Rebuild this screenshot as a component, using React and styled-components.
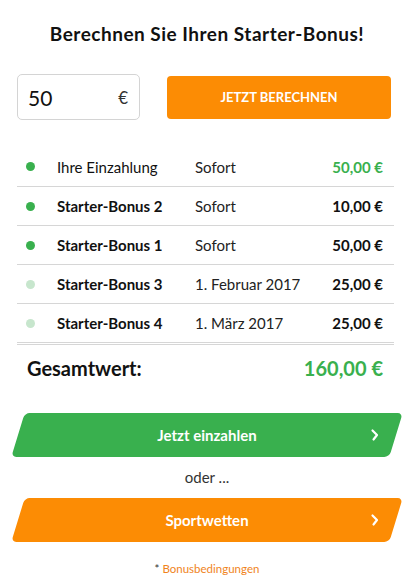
import styled, { createGlobalStyle } from "styled-components";

const GlobalStyle = createGlobalStyle`
  body {
    margin: 0;
    background: #fff;
    font-family: Lato, "Open Sans", sans-serif;
    color: #111;
  }
`;

const rows = [
  { label: "Ihre Einzahlung", when: "Sofort", amount: "50,00 €", active: true, deposit: true },
  { label: "Starter-Bonus 2", when: "Sofort", amount: "10,00 €", active: true },
  { label: "Starter-Bonus 1", when: "Sofort", amount: "50,00 €", active: true },
  { label: "Starter-Bonus 3", when: "1. Februar 2017", amount: "25,00 €" },
  { label: "Starter-Bonus 4", when: "1. März 2017", amount: "25,00 €" },
];

function Chevron() {
  return (
    <svg width="10" height="14" viewBox="0 0 10 14">
      <path d="M2.5 2.5 L7 7 L3.5 11.5" fill="none" stroke="#fff" strokeWidth="2.2" strokeLinecap="round" strokeLinejoin="round" />
    </svg>
  );
}

function App() {
  return (
    <Page>
      <GlobalStyle />
      <Title>Berechnen Sie Ihren Starter-Bonus!</Title>
      <Calc>
        <AmountBox>
          <span>50</span>
          <Euro>€</Euro>
        </AmountBox>
        <CalcButton>JETZT BERECHNEN</CalcButton>
      </Calc>
      <Table>
        {rows.map((r) => (
          <Row key={r.label}>
            <Dot active={r.active} />
            <Label bold={!r.deposit}>{r.label}</Label>
            <When>{r.when}</When>
            <Amount green={r.deposit}>{r.amount}</Amount>
          </Row>
        ))}
      </Table>
      <Total>
        <span>Gesamtwert:</span>
        <TotalAmount>160,00 €</TotalAmount>
      </Total>
      <SlantButton color="#39b04e">
        <span>Jetzt einzahlen</span>
        <Arrow><Chevron /></Arrow>
      </SlantButton>
      <Or>oder ...</Or>
      <SlantButton color="#fc8c04">
        <span>Sportwetten</span>
        <Arrow><Chevron /></Arrow>
      </SlantButton>
      <Terms>
        <Star>*</Star> Bonusbedingungen
      </Terms>
    </Page>
  );
}

export default App;

const Page = styled.div`
  width: 414px;
  box-sizing: border-box;
  padding: 22px 0 0;
  display: flex;
  flex-direction: column;
`;

const Title = styled.h1`
  margin: 0;
  text-align: center;
  font-size: 19px;
  font-weight: 700;
  line-height: 24px;
  letter-spacing: 0.5px;
  color: #111;
`;

const Calc = styled.div`
  display: flex;
  align-items: center;
  gap: 27px;
  padding: 0 23px 0 17px;
  margin-top: 28px;
`;

const AmountBox = styled.div`
  width: 123px;
  height: 46px;
  box-sizing: border-box;
  border: 1px solid #d4d4d4;
  border-radius: 5px;
  display: flex;
  align-items: center;
  justify-content: space-between;
  padding: 0 11px 0 10px;
  font-size: 21px;
  color: #111;
`;

const Euro = styled.span`
  font-size: 17px;
  color: #333;
`;

const CalcButton = styled.div`
  flex: 1;
  height: 43px;
  border-radius: 4px;
  background: #fc8c04;
  color: #fff;
  font-size: 13px;
  font-weight: 700;
  display: flex;
  align-items: center;
  justify-content: center;
`;

const Table = styled.div`
  margin: 27px 20px 0 17px;
  border-bottom: 3px double #d6d6d6;
`;

const Row = styled.div`
  display: grid;
  grid-template-columns: 40px 138px 1fr auto;
  align-items: center;
  height: 39px;
  box-sizing: border-box;
  padding-right: 11px;
  font-size: 15px;
  & + & {
    border-top: 1px solid #d6d6d6;
  }
`;

const Dot = styled.span`
  width: 9px;
  height: 9px;
  border-radius: 50%;
  margin-left: 9px;
  background: ${(p) => (p.active ? "#39b04e" : "#c7e6cd")};
`;

const Label = styled.span`
  font-weight: ${(p) => (p.bold ? 700 : 400)};
  color: #111;
`;

const When = styled.span`
  color: #222;
`;

const Amount = styled.span`
  font-weight: 700;
  color: ${(p) => (p.green ? "#39b04e" : "#111")};
`;

const Total = styled.div`
  display: flex;
  justify-content: space-between;
  align-items: center;
  height: 46px;
  margin: 0 31px 0 27px;
  font-size: 20px;
  font-weight: 700;
  color: #111;
`;

const TotalAmount = styled.span`
  color: #39b04e;
`;

const SlantButton = styled.div`
  position: relative;
  flex-shrink: 0;
  margin: 22px 18px 0 18px;
  height: 44px;
  display: flex;
  align-items: center;
  justify-content: center;
  color: #fff;
  font-size: 15px;
  font-weight: 700;
  &::before {
    content: "";
    position: absolute;
    inset: 0;
    background: ${(p) => p.color};
    border-radius: 5px;
    transform: skewX(-17deg);
  }
  & > span:first-child {
    position: relative;
  }
`;

const Arrow = styled.span`
  position: absolute;
  right: 16px;
  top: 15px;
  display: flex;
`;

const Or = styled.div`
  text-align: center;
  font-size: 15px;
  color: #333;
  height: 41px;
  line-height: 41px;
  & + ${SlantButton} {
    margin-top: 0;
  }
`;

const Terms = styled.div`
  margin-top: 20px;
  text-align: center;
  font-size: 11.5px;
  line-height: 14px;
  color: #f0841c;
`;

const Star = styled.span`
  color: #333;
`;
